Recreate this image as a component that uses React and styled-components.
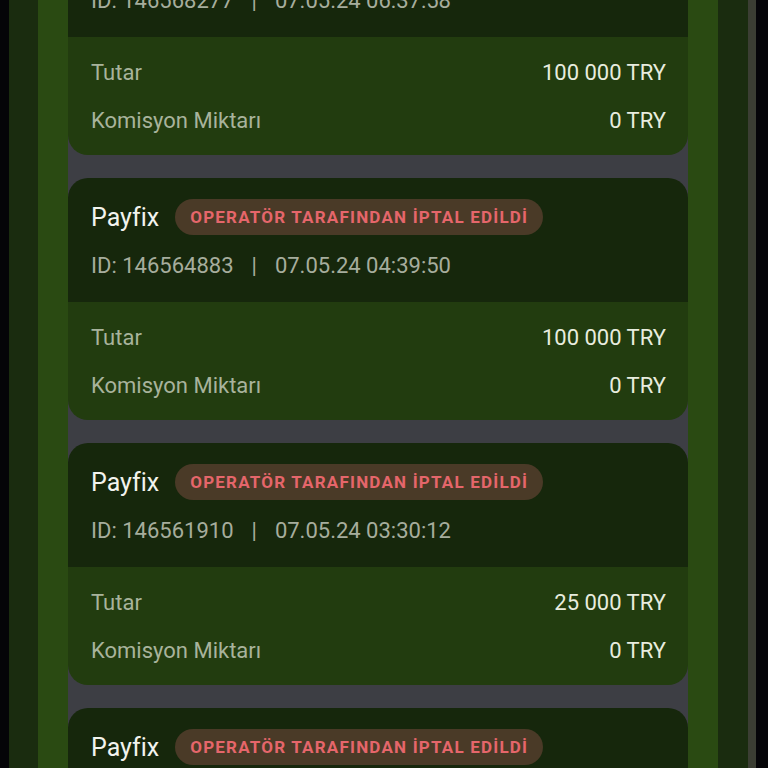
import React from 'react';
import styled, { createGlobalStyle } from 'styled-components';

const GlobalStyle = createGlobalStyle`
  html, body {
    margin: 0;
    padding: 0;
    background: #050508;
  }
  * { box-sizing: border-box; }
`;

const transactions = [
  { id: '146568277', date: '07.05.24 06:37:58', amount: '100 000 TRY', fee: '0 TRY' },
  { id: '146564883', date: '07.05.24 04:39:50', amount: '100 000 TRY', fee: '0 TRY' },
  { id: '146561910', date: '07.05.24 03:30:12', amount: '25 000 TRY', fee: '0 TRY' },
  { id: '146559402', date: '07.05.24 02:14:07', amount: '50 000 TRY', fee: '0 TRY' },
];

const App = () => {
  return (
    <>
      <GlobalStyle />
      <Screen>
        <Strip $w={9} $bg="#050508" />
        <Strip $w={29} $bg="#1a2c0f" />
        <Strip $w={30} $bg="#2a4a12" />
        <Feed>
          <List>
            {transactions.map((t) => (
              <Card key={t.id}>
                <CardHeader>
                  <TitleRow>
                    <Provider>Payfix</Provider>
                    <StatusBadge>OPERATÖR TARAFINDAN İPTAL EDİLDİ</StatusBadge>
                  </TitleRow>
                  <MetaLine>
                    <span>ID: {t.id}</span>
                    <Divider>|</Divider>
                    <span>{t.date}</span>
                  </MetaLine>
                </CardHeader>
                <CardBody>
                  <InfoRow>
                    <Label>Tutar</Label>
                    <Value>{t.amount}</Value>
                  </InfoRow>
                  <InfoRow>
                    <Label>Komisyon Miktarı</Label>
                    <Value>{t.fee}</Value>
                  </InfoRow>
                </CardBody>
              </Card>
            ))}
          </List>
        </Feed>
        <Strip $w={30} $bg="#2a4a12" />
        <Strip $w={30} $bg="#1a2c0f" />
        <Strip $w={8} $bg="#3b3e33" />
        <Strip $w={12} $bg="#050508" />
      </Screen>
    </>
  );
};

export default App;

const Screen = styled.div`
  width: 768px;
  height: 768px;
  display: flex;
  overflow: hidden;
  font-family: Roboto, 'Noto Sans', sans-serif;
  font-variant-ligatures: none;
`;

const Strip = styled.div`
  width: ${(p) => p.$w}px;
  flex-shrink: 0;
  background: ${(p) => p.$bg};
`;

const Feed = styled.div`
  width: 620px;
  flex-shrink: 0;
  background: #3d3e44;
  overflow: hidden;
`;

const List = styled.div`
  display: flex;
  flex-direction: column;
  gap: 23px;
  margin-top: -87px;
`;

const Card = styled.div`
  border-radius: 20px;
  overflow: hidden;
`;

const CardHeader = styled.div`
  background: #16270c;
  height: 124px;
  padding: 22px 22px 0 23px;
  display: flex;
  flex-direction: column;
  gap: 18px;
`;

const TitleRow = styled.div`
  display: flex;
  align-items: center;
  gap: 16px;
  height: 34px;
`;

const Provider = styled.div`
  font-size: 25px;
  color: #f2f3ee;
`;

const StatusBadge = styled.div`
  height: 36px;
  padding: 0 15px;
  border-radius: 18px;
  background: #4a3a27;
  color: #e5666b;
  font-size: 17px;
  font-weight: 700;
  letter-spacing: 1.2px;
  display: flex;
  align-items: center;
`;

const MetaLine = styled.div`
  display: flex;
  align-items: center;
  height: 26px;
  font-size: 22px;
  color: #a6ad9d;
`;

const Divider = styled.span`
  margin: 0 18px;
`;

const CardBody = styled.div`
  background: #223c0f;
  height: 118px;
  padding: 22px 22px 0 23px;
  display: flex;
  flex-direction: column;
  gap: 22px;
`;

const InfoRow = styled.div`
  display: flex;
  justify-content: space-between;
  align-items: center;
  height: 26px;
  font-size: 22px;
`;

const Label = styled.span`
  color: #a8b39c;
`;

const Value = styled.span`
  color: #e8ecdf;
`;
